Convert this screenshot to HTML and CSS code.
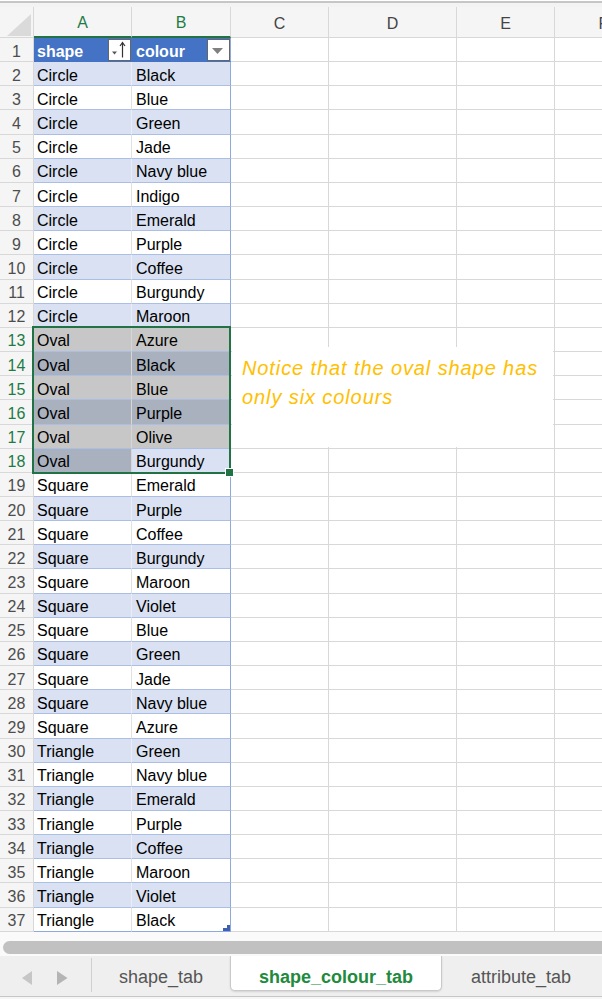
FILE: index.html
```html
<!DOCTYPE html>
<html>
<head>
<meta charset="utf-8">
<link rel="stylesheet" href="styles.css">
</head>
<body>
<div class="sheet">
  <div class="topstrip"></div>
  <div class="r hdr">
    <div class="corner"><svg width="24" height="22" viewBox="0 0 24 22"><polygon points="24,0 24,22 0,22" fill="#dadada"/></svg></div>
    <div class="ch on">A</div><div class="ch on">B</div><div class="ch">C</div><div class="ch">D</div><div class="ch">E</div><div class="ch">F</div>
  </div>
  <div class="r">
    <div class="rh">1</div>
    <div class="a th">shape<span class="fb"><svg width="21" height="20" viewBox="0 0 21 20"><polygon points="3,11.5 8,11.5 5.5,14.5" fill="#555"/><line x1="13.5" y1="3" x2="13.5" y2="17.5" stroke="#333" stroke-width="1.2"/><polyline points="11,6 13.5,2.6 16,6" fill="none" stroke="#333" stroke-width="1.2"/></svg></span></div>
    <div class="b th">colour<span class="fb"><svg width="21" height="20" viewBox="0 0 21 20"><polygon points="4,8 15,8 9.5,14" fill="#808080"/></svg></span></div>
    <div class="e"></div><div class="e"></div><div class="e"></div><div class="e"></div>
  </div>
  <div class="r bd"><div class="rh">2</div><div class="a">Circle</div><div class="b">Black</div><div class="e"></div><div class="e"></div><div class="e"></div><div class="e"></div></div>
  <div class="r"><div class="rh">3</div><div class="a">Circle</div><div class="b">Blue</div><div class="e"></div><div class="e"></div><div class="e"></div><div class="e"></div></div>
  <div class="r bd"><div class="rh">4</div><div class="a">Circle</div><div class="b">Green</div><div class="e"></div><div class="e"></div><div class="e"></div><div class="e"></div></div>
  <div class="r"><div class="rh">5</div><div class="a">Circle</div><div class="b">Jade</div><div class="e"></div><div class="e"></div><div class="e"></div><div class="e"></div></div>
  <div class="r bd"><div class="rh">6</div><div class="a">Circle</div><div class="b">Navy blue</div><div class="e"></div><div class="e"></div><div class="e"></div><div class="e"></div></div>
  <div class="r"><div class="rh">7</div><div class="a">Circle</div><div class="b">Indigo</div><div class="e"></div><div class="e"></div><div class="e"></div><div class="e"></div></div>
  <div class="r bd"><div class="rh">8</div><div class="a">Circle</div><div class="b">Emerald</div><div class="e"></div><div class="e"></div><div class="e"></div><div class="e"></div></div>
  <div class="r"><div class="rh">9</div><div class="a">Circle</div><div class="b">Purple</div><div class="e"></div><div class="e"></div><div class="e"></div><div class="e"></div></div>
  <div class="r bd"><div class="rh">10</div><div class="a">Circle</div><div class="b">Coffee</div><div class="e"></div><div class="e"></div><div class="e"></div><div class="e"></div></div>
  <div class="r"><div class="rh">11</div><div class="a">Circle</div><div class="b">Burgundy</div><div class="e"></div><div class="e"></div><div class="e"></div><div class="e"></div></div>
  <div class="r bd"><div class="rh">12</div><div class="a">Circle</div><div class="b">Maroon</div><div class="e"></div><div class="e"></div><div class="e"></div><div class="e"></div></div>
  <div class="r"><div class="rh on">13</div><div class="a s1">Oval</div><div class="b s1">Azure</div><div class="e"></div><div class="e"></div><div class="e"></div><div class="e"></div></div>
  <div class="r bd"><div class="rh on">14</div><div class="a s2">Oval</div><div class="b s2">Black</div><div class="e"></div><div class="e"></div><div class="e"></div><div class="e"></div></div>
  <div class="r"><div class="rh on">15</div><div class="a s1">Oval</div><div class="b s1">Blue</div><div class="e"></div><div class="e"></div><div class="e"></div><div class="e"></div></div>
  <div class="r bd"><div class="rh on">16</div><div class="a s2">Oval</div><div class="b s2">Purple</div><div class="e"></div><div class="e"></div><div class="e"></div><div class="e"></div></div>
  <div class="r"><div class="rh on">17</div><div class="a s1">Oval</div><div class="b s1">Olive</div><div class="e"></div><div class="e"></div><div class="e"></div><div class="e"></div></div>
  <div class="r bd"><div class="rh on">18</div><div class="a s2">Oval</div><div class="b">Burgundy</div><div class="e"></div><div class="e"></div><div class="e"></div><div class="e"></div></div>
  <div class="r"><div class="rh">19</div><div class="a">Square</div><div class="b">Emerald</div><div class="e"></div><div class="e"></div><div class="e"></div><div class="e"></div></div>
  <div class="r bd"><div class="rh">20</div><div class="a">Square</div><div class="b">Purple</div><div class="e"></div><div class="e"></div><div class="e"></div><div class="e"></div></div>
  <div class="r"><div class="rh">21</div><div class="a">Square</div><div class="b">Coffee</div><div class="e"></div><div class="e"></div><div class="e"></div><div class="e"></div></div>
  <div class="r bd"><div class="rh">22</div><div class="a">Square</div><div class="b">Burgundy</div><div class="e"></div><div class="e"></div><div class="e"></div><div class="e"></div></div>
  <div class="r"><div class="rh">23</div><div class="a">Square</div><div class="b">Maroon</div><div class="e"></div><div class="e"></div><div class="e"></div><div class="e"></div></div>
  <div class="r bd"><div class="rh">24</div><div class="a">Square</div><div class="b">Violet</div><div class="e"></div><div class="e"></div><div class="e"></div><div class="e"></div></div>
  <div class="r"><div class="rh">25</div><div class="a">Square</div><div class="b">Blue</div><div class="e"></div><div class="e"></div><div class="e"></div><div class="e"></div></div>
  <div class="r bd"><div class="rh">26</div><div class="a">Square</div><div class="b">Green</div><div class="e"></div><div class="e"></div><div class="e"></div><div class="e"></div></div>
  <div class="r"><div class="rh">27</div><div class="a">Square</div><div class="b">Jade</div><div class="e"></div><div class="e"></div><div class="e"></div><div class="e"></div></div>
  <div class="r bd"><div class="rh">28</div><div class="a">Square</div><div class="b">Navy blue</div><div class="e"></div><div class="e"></div><div class="e"></div><div class="e"></div></div>
  <div class="r"><div class="rh">29</div><div class="a">Square</div><div class="b">Azure</div><div class="e"></div><div class="e"></div><div class="e"></div><div class="e"></div></div>
  <div class="r bd"><div class="rh">30</div><div class="a">Triangle</div><div class="b">Green</div><div class="e"></div><div class="e"></div><div class="e"></div><div class="e"></div></div>
  <div class="r"><div class="rh">31</div><div class="a">Triangle</div><div class="b">Navy blue</div><div class="e"></div><div class="e"></div><div class="e"></div><div class="e"></div></div>
  <div class="r bd"><div class="rh">32</div><div class="a">Triangle</div><div class="b">Emerald</div><div class="e"></div><div class="e"></div><div class="e"></div><div class="e"></div></div>
  <div class="r"><div class="rh">33</div><div class="a">Triangle</div><div class="b">Purple</div><div class="e"></div><div class="e"></div><div class="e"></div><div class="e"></div></div>
  <div class="r bd"><div class="rh">34</div><div class="a">Triangle</div><div class="b">Coffee</div><div class="e"></div><div class="e"></div><div class="e"></div><div class="e"></div></div>
  <div class="r"><div class="rh">35</div><div class="a">Triangle</div><div class="b">Maroon</div><div class="e"></div><div class="e"></div><div class="e"></div><div class="e"></div></div>
  <div class="r bd"><div class="rh">36</div><div class="a">Triangle</div><div class="b">Violet</div><div class="e"></div><div class="e"></div><div class="e"></div><div class="e"></div></div>
  <div class="r last"><div class="rh">37</div><div class="a">Triangle</div><div class="b tcell">Black<span class="tc"><svg width="7" height="6" viewBox="0 0 7 6"><polygon points="4,0 7,0 7,6 0,6 0,3 4,3" fill="#3f5fb4"/></svg></span></div><div class="e"></div><div class="e"></div><div class="e"></div><div class="e"></div></div>

  <div class="selbox"></div>
  <div class="handle"></div>
  <div class="note">Notice that the oval shape has<br>only six colours</div>
</div>
<div class="scroll"><div class="thumb"></div></div>
<div class="tabs">
  <div class="nav">
    <svg class="arr" width="11" height="14" viewBox="0 0 11 14"><polygon points="10,0 10,14 0,7" fill="#c6c6c6"/></svg>
    <svg class="arr" width="11" height="14" viewBox="0 0 11 14"><polygon points="0,0 0,14 10.5,7" fill="#b4b4b4"/></svg>
  </div>
  <div class="tab t1">shape_tab</div>
  <div class="tab act">shape_colour_tab</div>
  <div class="tab t3">attribute_tab</div>
</div>
<div class="foot"></div>
</body>
</html>
```
FILE: styles.css
```css
html, body {
  margin: 0;
  padding: 0;
  background: #fff;
  overflow: hidden;
  width: 602px;
  height: 999px;
}
body {
  font-family: "Liberation Sans", Arial, sans-serif;
}
.sheet {
  position: relative;
  width: 602px;
  overflow: hidden;
}
.topstrip {
  height: 7px;
  background: linear-gradient(to bottom, #ffffff 0 1px, #c6c6c6 1px 3px, #f3f3f3 3px 7px);
}
.r {
  display: grid;
  grid-template-columns: 34px 98px 99px 98px 128px 98px 98px;
  height: 24.17px;
  width: 653px;
}
.r > div {
  box-sizing: border-box;
  border-right: 1px solid #d8d8d8;
  border-bottom: 1px solid #d8d8d8;
  display: flex;
  align-items: center;
  overflow: hidden;
  white-space: nowrap;
  font-size: 16px;
  color: #000;
  padding-top: 4px;
}
.r.hdr {
  height: 31px;
}
.hdr > div {
  background: #f5f5f5;
  justify-content: center;
  color: #444;
  font-size: 16px;
  padding-top: 3px;
}
.hdr > .ch.on {
  color: #1e7b45;
  border-bottom: 2px solid #217346;
}
.hdr > .corner {
  justify-content: flex-end;
  align-items: flex-end;
  padding: 0 2px 1px 0;
}
.corner svg {
  display: block;
}
.r > .rh {
  background: #f5f5f5;
  justify-content: center;
  color: #4d4d4d;
}
.r > .rh.on {
  color: #1e7b45;
}
.r > .a {
  padding-left: 3px;
  border-bottom-color: #abbfe4;
  border-right-color: #e2e2e2;
}
.r > .b {
  padding-left: 4px;
  border-bottom-color: #abbfe4;
  border-right-color: #8eaadb;
}
.bd > .a,
.bd > .b {
  background: #d9e1f2;
}
.bd > .a {
  border-right-color: #e8edf7;
}
.r > .th {
  background: #4472c4;
  color: #fff;
  font-weight: bold;
  border-bottom-color: #4472c4;
  border-right-color: #4472c4;
  padding-right: 0;
}
.r > .b.th {
  border-right-color: #8eaadb;
}
.fb {
  margin-left: auto;
  margin-top: -4px;
  width: 23px;
  height: 22px;
  box-sizing: border-box;
  border: 1px solid #666;
  background: #fff;
  display: flex;
}
.fb svg {
  display: block;
}
.r > .s1 {
  background: #c7c7c7;
}
.r > .s2 {
  background: #a9b0be;
}
.r > .a.s1, .r > .a.s2 {
  border-right-color: #d6d6d6;
}
.last > .a, .last > .b {
  border-bottom-color: #8eaadb;
}
.tcell {
  position: relative;
}
.tc {
  position: absolute;
  right: 0;
  bottom: 0;
  width: 7px;
  height: 6px;
  display: flex;
}
.selbox {
  position: absolute;
  left: 32px;
  top: 326px;
  width: 199px;
  height: 148px;
  box-sizing: border-box;
  border: 2px solid #217346;
}
.handle {
  position: absolute;
  left: 225px;
  top: 468px;
  width: 9px;
  height: 9px;
  box-sizing: border-box;
  background: #217346;
  border: 1px solid #fff;
}
.note {
  position: absolute;
  left: 232px;
  top: 347px;
  width: 321px;
  height: 100px;
  box-sizing: border-box;
  background: #fff;
  padding: 7px 0 0 10px;
  font-style: italic;
  font-size: 20px;
  letter-spacing: 0.9px;
  line-height: 29px;
  color: #ffc000;
}
.scroll {
  height: 24px;
  box-sizing: border-box;
  padding: 9px 0 0 3px;
  background: #fafafa;
  overflow: hidden;
}
.thumb {
  height: 13px;
  border-radius: 7px;
  background: #c1c1c1;
  margin-right: -20px;
}
.tabs {
  height: 41px;
  box-sizing: border-box;
  display: flex;
  align-items: flex-start;
  background: #efefef;
  border-bottom: 1px solid #c6c6c6;
}
.nav {
  width: 92px;
  height: 34px;
  margin-top: 2px;
  box-sizing: border-box;
  border-right: 1px solid #d0d0d0;
  display: flex;
  align-items: center;
  gap: 24px;
  padding: 7px 0 0 22px;
}
.arr {
  display: block;
}
.tab {
  height: 35px;
  box-sizing: border-box;
  padding-top: 9px;
  display: flex;
  align-items: center;
  justify-content: center;
  font-size: 18px;
  color: #555;
}
.t1 {
  width: 138px;
}
.act {
  width: 212px;
  background: #fff;
  border: 1px solid #c9c9c9;
  border-top: none;
  border-radius: 0 0 5px 5px;
  box-shadow: 0 1px 2px rgba(0, 0, 0, 0.12);
  color: #218a3c;
  font-weight: bold;
}
.t3 {
  width: 158px;
  margin-top: 2px;
  height: 33px;
  padding-top: 7px;
}
.foot {
  height: 2px;
  background: #f6f6f6;
}
```
